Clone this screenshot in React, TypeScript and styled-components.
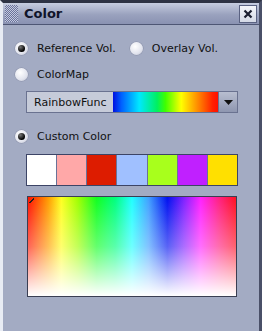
import React from "react";
import styled, { createGlobalStyle } from "styled-components";

const Global = createGlobalStyle`
  html, body { margin: 0; padding: 0; background: #2a2e3c; }
  body { font-family: "DejaVu Sans", sans-serif; }
`;

const Frame = styled.div`
  width: 262px;
  height: 331px;
  box-sizing: border-box;
  padding-top: 3px;
  background: #a3abc3;
  border-left: 3px solid #e8ecf4;
  border-right: 3px solid #4a5068;
  border-top: 3px solid #2e3344;
  display: flex;
  flex-direction: column;
  overflow: hidden;
`;

const TitleBar = styled.div`
  height: 21px;
  margin-top: -3px;
  display: flex;
  align-items: center;
  gap: 6px;
  padding: 0 2px 0 2px;
  background: linear-gradient(#c6cde0, #9aa2be 55%, #8a92b2);
  border-bottom: 1px solid #4e5674;
`;

const Grip = styled.div`
  width: 13px;
  height: 17px;
  background: conic-gradient(#6a729a 25%, #c4cadf 0 50%, #6a729a 0 75%, #c4cadf 0);
  background-size: 2px 2px;
`;

const Title = styled.div`
  flex: 1;
  font-weight: bold;
  font-size: 13px;
  color: #10142a;
`;

const CloseBtn = styled.div`
  width: 16px;
  height: 16px;
  border: 1px solid #5a6282;
  background: linear-gradient(#f4f6fa, #d4d9e6);
  display: flex;
  align-items: center;
  justify-content: center;
`;

const Body = styled.div`
  display: flex;
  flex-direction: column;
  padding: 14px 21px 0 8px;
`;

const RadioRow = styled.div<{ $mt?: number }>`
  display: flex;
  align-items: center;
  height: 18px;
  margin-top: ${(p) => p.$mt ?? 0}px;
  font-size: 11px;
  color: #111;
  white-space: nowrap;
`;

const RadioItem = styled.label`
  display: flex;
  align-items: center;
  gap: 9px;
  margin-right: 10px;
`;

const Radio = styled.span<{ $on?: boolean }>`
  width: 13px;
  height: 13px;
  border-radius: 50%;
  margin-left: 4px;
  background: radial-gradient(circle at 40% 35%, #ffffff, #e2e4ee 60%, #b8bccc);
  box-shadow: 0 0 0 0.5px #8a90a8;
  display: flex;
  align-items: center;
  justify-content: center;
  &::after {
    content: "";
    display: ${(p) => (p.$on ? "block" : "none")};
    width: 7px;
    height: 7px;
    border-radius: 50%;
    background: radial-gradient(circle at 35% 30%, #777, #000 70%);
  }
`;

const Combo = styled.div`
  margin: 8px 0 0 15px;
  height: 20px;
  display: flex;
  border: 1px solid #6a7290;
  background: #c6cbd9;
`;

const ComboText = styled.div`
  width: 86px;
  padding-left: 7px;
  box-sizing: border-box;
  display: flex;
  align-items: center;
  font-size: 11px;
  color: #111;
  white-space: nowrap;
`;

const Rainbow = styled.div`
  width: 105px;
  background: linear-gradient(90deg, #0010e0, #0060ff 8%, #00e8ff 25%, #00f060 42%, #40ff00 50%, #ffff00 65%, #ff9000 80%, #ff2000 95%, #ff1000);
`;

const Arrow = styled.div`
  flex: 1;
  display: flex;
  align-items: center;
  justify-content: center;
  background: linear-gradient(#b8bed0, #8e96b0);
  border-left: 1px solid #6a7290;
`;

const Swatches = styled.div`
  margin: 9px 0 0 15px;
  height: 30px;
  display: grid;
  grid-template-columns: repeat(7, 1fr);
  gap: 1px;
  border: 1px solid #3c4466;
  background: #6a7298;
`;

const Swatch = styled.div<{ $c: string }>`
  background: ${(p) => p.$c};
`;

const Picker = styled.div`
  margin: 10px 1px 0 16px;
  height: 99px;
  border: 1px solid #3a3e52;
  position: relative;
  background:
    linear-gradient(to bottom, rgba(255,255,255,0) 0%, rgba(255,255,255,0.35) 50%, #fff 100%),
    linear-gradient(90deg, #ff1000 0%, #ffa000 10%, #ffff20 16%, #a0ff00 24%, #10ff20 33%, #00ff80 42%, #20ffff 50%, #40a0ff 58%, #0010f0 67%, #8020ff 75%, #ff20ff 83%, #ff2080 92%, #ff1020 100%);
`;

const Corner = styled.div`
  position: absolute;
  left: 1px;
  top: 1px;
  width: 5px;
  height: 5px;
  background: linear-gradient(135deg, transparent 40%, #222 40%, #222 60%, transparent 60%);
`;

export default function App() {
  return (
    <>
      <Global />
      <Frame>
        <TitleBar>
          <Grip />
          <Title>Color</Title>
          <CloseBtn>
            <svg width="10" height="10" viewBox="0 0 10 10">
              <path d="M1.5 1.5 L8.5 8.5 M8.5 1.5 L1.5 8.5" stroke="#1a1e30" strokeWidth="2.2" />
            </svg>
          </CloseBtn>
        </TitleBar>
        <Body>
          <RadioRow>
            <RadioItem><Radio $on />Reference Vol.</RadioItem>
            <RadioItem><Radio />Overlay Vol.</RadioItem>
          </RadioRow>
          <RadioRow $mt={8}>
            <RadioItem><Radio />ColorMap</RadioItem>
          </RadioRow>
          <Combo>
            <ComboText>RainbowFunc</ComboText>
            <Rainbow />
            <Arrow>
              <svg width="9" height="5" viewBox="0 0 9 5">
                <path d="M0 0 H9 L4.5 5 Z" fill="#111" />
              </svg>
            </Arrow>
          </Combo>
          <RadioRow $mt={14}>
            <RadioItem><Radio $on />Custom Color</RadioItem>
          </RadioRow>
          <Swatches>
            {["#ffffff", "#ffa8a8", "#dd1c00", "#a0c0ff", "#a8ff1c", "#c020ff", "#ffe000"].map((c) => (
              <Swatch key={c} $c={c} />
            ))}
          </Swatches>
          <Picker>
            <Corner />
          </Picker>
        </Body>
      </Frame>
    </>
  );
}
